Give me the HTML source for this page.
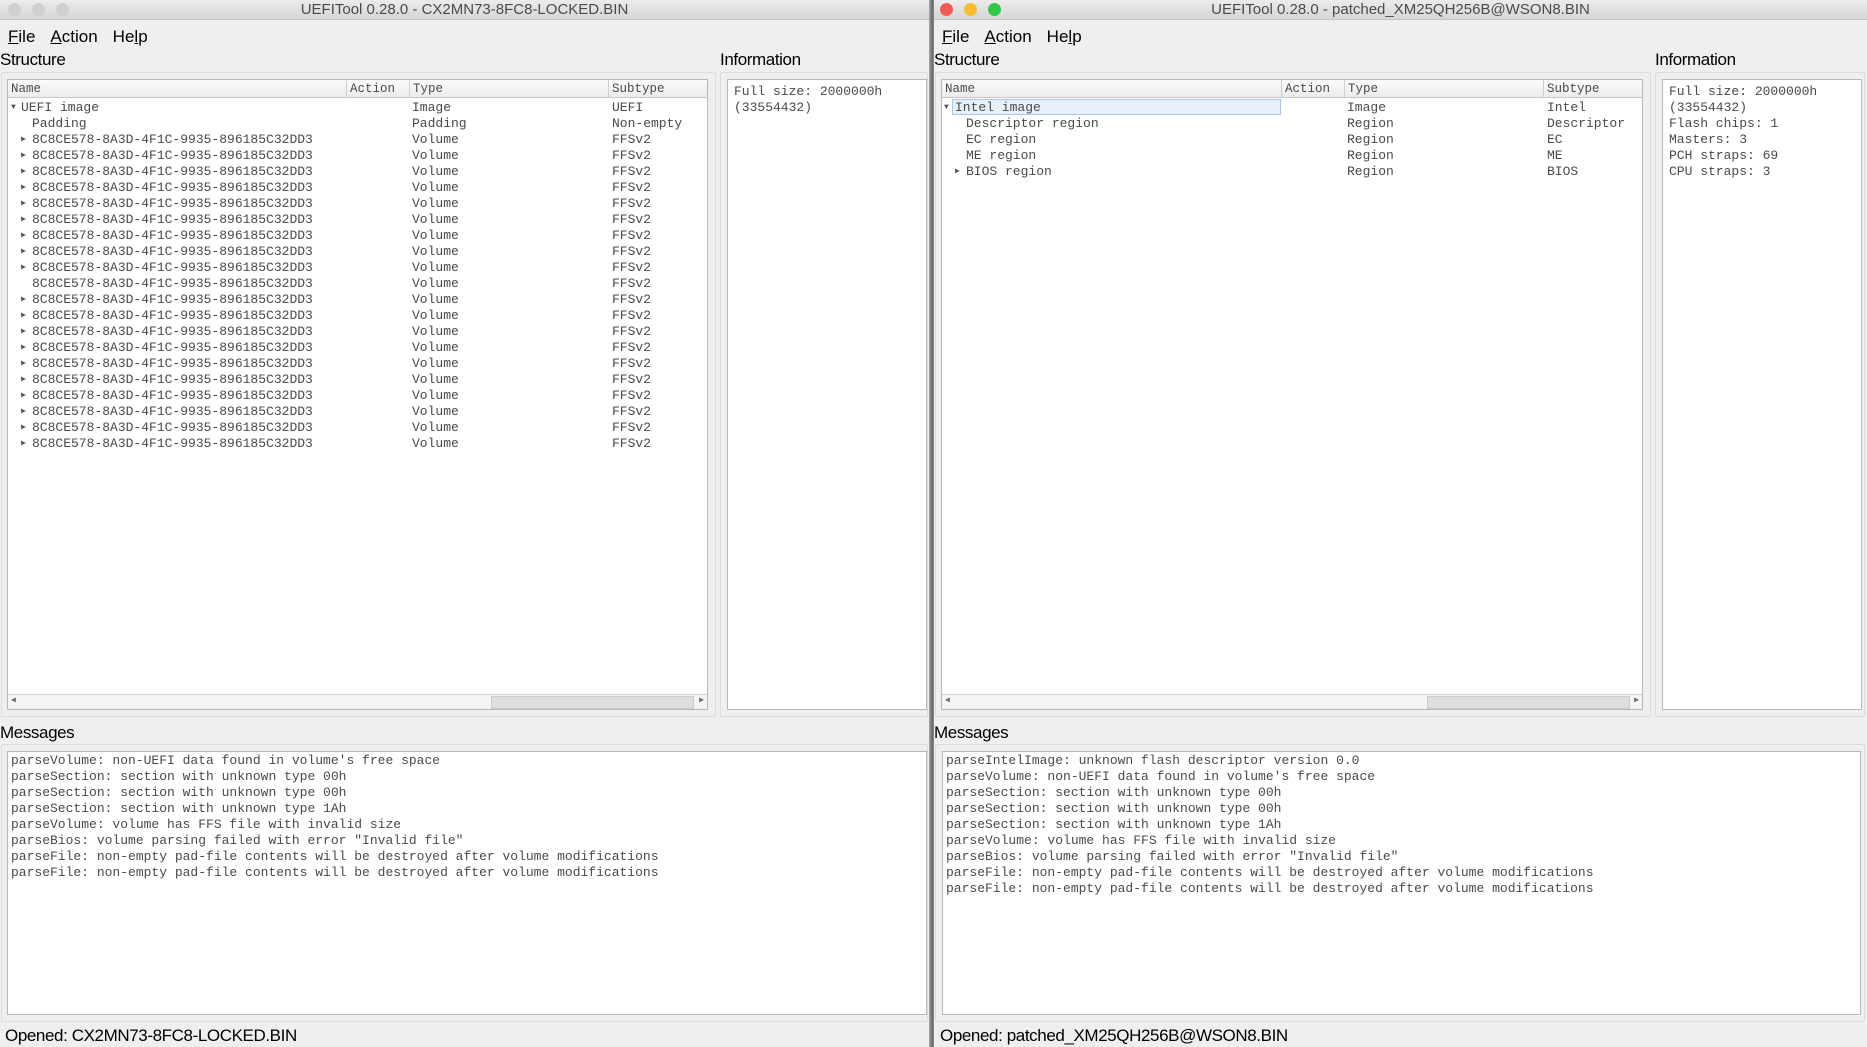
<!DOCTYPE html>
<html><head><meta charset="utf-8"><style>
*{margin:0;padding:0;box-sizing:border-box}
body{width:1867px;height:1047px;background:#efefef;position:relative;overflow:hidden;font-family:"Liberation Sans",sans-serif;color:#000}
.win{position:absolute;top:0;height:1047px;background:#efefef;overflow:hidden}
.tb{position:absolute;left:0;right:0;top:0;height:20px;background:linear-gradient(#ececec,#d6d6d6);border-bottom:1px solid #c4c4c4;text-align:center;font-size:15px;line-height:19px;color:#4a4a4a}
.dot{position:absolute;top:3px;width:13px;height:13px;border-radius:50%}
.menu{position:absolute;top:27px;left:8px;font-size:17px}
.menu span{margin-right:15px}
.lbl{position:absolute;font-size:17px;letter-spacing:-0.4px}
.frame{position:absolute;border:1px solid #dcdcdc;border-radius:2px}
.box{position:absolute;background:#fff;border:1px solid #b8b8b8;overflow:hidden;font-family:"Liberation Mono",monospace;font-size:13px;color:#4a4a4a}
.hdr{position:absolute;left:0;right:0;top:0;height:18px;background:linear-gradient(#fbfbfb,#ececec);border-bottom:1px solid #c8c8c8;font-size:12.5px;line-height:19px}
.hdr span{position:absolute;top:0;height:17px;border-left:1px solid #d0d0d0;padding-left:3px}
.row{position:absolute;left:0;right:0;height:16px;line-height:17px;white-space:pre}
.row span{position:absolute;top:0}
.sb{position:absolute;left:0;right:0;bottom:0;height:15px;background:#f4f4f4;border-top:1px solid #d0d0d0}
.thumb{position:absolute;top:1px;height:13px;background:#dedede;border:1px solid #ccc}
.msg{position:absolute;left:3px;line-height:16px;white-space:pre}
.st{position:absolute;top:1026px;font-size:17px;letter-spacing:-0.4px}
.arr{font-size:8px;color:#555}
</style></head><body>

<!-- LEFT WINDOW -->
<div class="win" style="left:0;width:929px">
 <div class="tb">UEFITool 0.28.0 - CX2MN73-8FC8-LOCKED.BIN
  <div class="dot" style="left:8px;background:#cfcfcf"></div><div class="dot" style="left:32px;background:#cfcfcf"></div><div class="dot" style="left:56px;background:#cfcfcf"></div>
 </div>
 <div class="menu"><span><u>F</u>ile</span><span><u>A</u>ction</span><span>He<u>l</u>p</span></div>
 <div class="lbl" style="left:0;top:50px">Structure</div>
 <div class="lbl" style="left:720px;top:50px">Information</div>
 <div class="frame" style="left:1px;top:72px;width:715px;height:645px"></div>
 <div class="frame" style="left:720px;top:72px;width:208px;height:645px"></div>
 <div class="box" style="left:7px;top:79px;width:701px;height:631px">
  <div class="hdr"><span style="left:0;border:0">Name</span><span style="left:338px">Action</span><span style="left:401px">Type</span><span style="left:600px">Subtype</span></div>
  <div class="row" style="top:19px"><span style="left:3px" class="arr">▼</span><span style="left:13px">UEFI image</span><span style="left:404px">Image</span><span style="left:604px">UEFI</span></div>
  <div class="row" style="top:35px"><span style="left:24px">Padding</span><span style="left:404px">Padding</span><span style="left:604px">Non-empty</span></div>
  <div class="row" style="top:51px"><span style="left:13px" class="arr">▶</span><span style="left:24px">8C8CE578-8A3D-4F1C-9935-896185C32DD3</span><span style="left:404px">Volume</span><span style="left:604px">FFSv2</span></div>
  <div class="row" style="top:67px"><span style="left:13px" class="arr">▶</span><span style="left:24px">8C8CE578-8A3D-4F1C-9935-896185C32DD3</span><span style="left:404px">Volume</span><span style="left:604px">FFSv2</span></div>
  <div class="row" style="top:83px"><span style="left:13px" class="arr">▶</span><span style="left:24px">8C8CE578-8A3D-4F1C-9935-896185C32DD3</span><span style="left:404px">Volume</span><span style="left:604px">FFSv2</span></div>
  <div class="row" style="top:99px"><span style="left:13px" class="arr">▶</span><span style="left:24px">8C8CE578-8A3D-4F1C-9935-896185C32DD3</span><span style="left:404px">Volume</span><span style="left:604px">FFSv2</span></div>
  <div class="row" style="top:115px"><span style="left:13px" class="arr">▶</span><span style="left:24px">8C8CE578-8A3D-4F1C-9935-896185C32DD3</span><span style="left:404px">Volume</span><span style="left:604px">FFSv2</span></div>
  <div class="row" style="top:131px"><span style="left:13px" class="arr">▶</span><span style="left:24px">8C8CE578-8A3D-4F1C-9935-896185C32DD3</span><span style="left:404px">Volume</span><span style="left:604px">FFSv2</span></div>
  <div class="row" style="top:147px"><span style="left:13px" class="arr">▶</span><span style="left:24px">8C8CE578-8A3D-4F1C-9935-896185C32DD3</span><span style="left:404px">Volume</span><span style="left:604px">FFSv2</span></div>
  <div class="row" style="top:163px"><span style="left:13px" class="arr">▶</span><span style="left:24px">8C8CE578-8A3D-4F1C-9935-896185C32DD3</span><span style="left:404px">Volume</span><span style="left:604px">FFSv2</span></div>
  <div class="row" style="top:179px"><span style="left:13px" class="arr">▶</span><span style="left:24px">8C8CE578-8A3D-4F1C-9935-896185C32DD3</span><span style="left:404px">Volume</span><span style="left:604px">FFSv2</span></div>
  <div class="row" style="top:195px"><span style="left:24px">8C8CE578-8A3D-4F1C-9935-896185C32DD3</span><span style="left:404px">Volume</span><span style="left:604px">FFSv2</span></div>
  <div class="row" style="top:211px"><span style="left:13px" class="arr">▶</span><span style="left:24px">8C8CE578-8A3D-4F1C-9935-896185C32DD3</span><span style="left:404px">Volume</span><span style="left:604px">FFSv2</span></div>
  <div class="row" style="top:227px"><span style="left:13px" class="arr">▶</span><span style="left:24px">8C8CE578-8A3D-4F1C-9935-896185C32DD3</span><span style="left:404px">Volume</span><span style="left:604px">FFSv2</span></div>
  <div class="row" style="top:243px"><span style="left:13px" class="arr">▶</span><span style="left:24px">8C8CE578-8A3D-4F1C-9935-896185C32DD3</span><span style="left:404px">Volume</span><span style="left:604px">FFSv2</span></div>
  <div class="row" style="top:259px"><span style="left:13px" class="arr">▶</span><span style="left:24px">8C8CE578-8A3D-4F1C-9935-896185C32DD3</span><span style="left:404px">Volume</span><span style="left:604px">FFSv2</span></div>
  <div class="row" style="top:275px"><span style="left:13px" class="arr">▶</span><span style="left:24px">8C8CE578-8A3D-4F1C-9935-896185C32DD3</span><span style="left:404px">Volume</span><span style="left:604px">FFSv2</span></div>
  <div class="row" style="top:291px"><span style="left:13px" class="arr">▶</span><span style="left:24px">8C8CE578-8A3D-4F1C-9935-896185C32DD3</span><span style="left:404px">Volume</span><span style="left:604px">FFSv2</span></div>
  <div class="row" style="top:307px"><span style="left:13px" class="arr">▶</span><span style="left:24px">8C8CE578-8A3D-4F1C-9935-896185C32DD3</span><span style="left:404px">Volume</span><span style="left:604px">FFSv2</span></div>
  <div class="row" style="top:323px"><span style="left:13px" class="arr">▶</span><span style="left:24px">8C8CE578-8A3D-4F1C-9935-896185C32DD3</span><span style="left:404px">Volume</span><span style="left:604px">FFSv2</span></div>
  <div class="row" style="top:339px"><span style="left:13px" class="arr">▶</span><span style="left:24px">8C8CE578-8A3D-4F1C-9935-896185C32DD3</span><span style="left:404px">Volume</span><span style="left:604px">FFSv2</span></div>
  <div class="row" style="top:355px"><span style="left:13px" class="arr">▶</span><span style="left:24px">8C8CE578-8A3D-4F1C-9935-896185C32DD3</span><span style="left:404px">Volume</span><span style="left:604px">FFSv2</span></div>
  <div class="sb"><span style="position:absolute;left:3px;top:0;font-size:8px;color:#666">◀</span><div class="thumb" style="left:483px;width:203px"></div><span style="position:absolute;right:3px;top:0;font-size:8px;color:#666">▶</span></div>
 </div>
 <div class="box" style="left:727px;top:79px;width:200px;height:631px">
  <div class="msg" style="left:6px;top:4px">Full size: 2000000h
(33554432)</div>
 </div>
 <div class="lbl" style="left:0;top:723px">Messages</div>
 <div class="frame" style="left:1px;top:744px;width:927px;height:278px"></div>
 <div class="box" style="left:7px;top:751px;width:920px;height:264px">
  <div class="msg" style="left:3px;top:1px">parseVolume: non-UEFI data found in volume's free space
parseSection: section with unknown type 00h
parseSection: section with unknown type 00h
parseSection: section with unknown type 1Ah
parseVolume: volume has FFS file with invalid size
parseBios: volume parsing failed with error "Invalid file"
parseFile: non-empty pad-file contents will be destroyed after volume modifications
parseFile: non-empty pad-file contents will be destroyed after volume modifications</div>
 </div>
 <div class="st" style="left:5px">Opened: CX2MN73-8FC8-LOCKED.BIN</div>
</div>

<div style="position:absolute;left:929px;top:0;width:5px;height:1047px;background:linear-gradient(90deg,#aaa,#6a6a6a 60%,#888)"></div>

<!-- RIGHT WINDOW -->
<div class="win" style="left:934px;width:933px">
 <div class="tb">UEFITool 0.28.0 - patched_XM25QH256B@WSON8.BIN
  <div class="dot" style="left:6px;background:#f25a55"></div><div class="dot" style="left:30px;background:#f8bc32"></div><div class="dot" style="left:54px;background:#33c748"></div>
 </div>
 <div class="menu" style="left:8px"><span><u>F</u>ile</span><span><u>A</u>ction</span><span>He<u>l</u>p</span></div>
 <div class="lbl" style="left:0;top:50px">Structure</div>
 <div class="lbl" style="left:721px;top:50px">Information</div>
 <div class="frame" style="left:1px;top:72px;width:716px;height:645px"></div>
 <div class="frame" style="left:721px;top:72px;width:210px;height:645px"></div>
 <div class="box" style="left:7px;top:79px;width:702px;height:631px">
  <div class="hdr"><span style="left:0;border:0">Name</span><span style="left:339px">Action</span><span style="left:402px">Type</span><span style="left:601px">Subtype</span></div>
  <div style="position:absolute;left:10px;top:19px;width:329px;height:16px;background:#e8f1fb;border:1px solid #a9c6e6"></div>
  <div class="row" style="top:19px"><span style="left:2px" class="arr">▼</span><span style="left:13px">Intel image</span><span style="left:405px">Image</span><span style="left:605px">Intel</span></div>
  <div class="row" style="top:35px"><span style="left:24px">Descriptor region</span><span style="left:405px">Region</span><span style="left:605px">Descriptor</span></div>
  <div class="row" style="top:51px"><span style="left:24px">EC region</span><span style="left:405px">Region</span><span style="left:605px">EC</span></div>
  <div class="row" style="top:67px"><span style="left:24px">ME region</span><span style="left:405px">Region</span><span style="left:605px">ME</span></div>
  <div class="row" style="top:83px"><span style="left:13px" class="arr">▶</span><span style="left:24px">BIOS region</span><span style="left:405px">Region</span><span style="left:605px">BIOS</span></div>
  <div class="sb"><span style="position:absolute;left:3px;top:0;font-size:8px;color:#666">◀</span><div class="thumb" style="left:485px;width:203px"></div><span style="position:absolute;right:3px;top:0;font-size:8px;color:#666">▶</span></div>
 </div>
 <div class="box" style="left:728px;top:79px;width:200px;height:631px">
  <div class="msg" style="left:6px;top:4px">Full size: 2000000h
(33554432)
Flash chips: 1
Masters: 3
PCH straps: 69
CPU straps: 3</div>
 </div>
 <div class="lbl" style="left:0;top:723px">Messages</div>
 <div class="frame" style="left:1px;top:744px;width:930px;height:278px"></div>
 <div class="box" style="left:8px;top:751px;width:919px;height:264px">
  <div class="msg" style="left:3px;top:1px">parseIntelImage: unknown flash descriptor version 0.0
parseVolume: non-UEFI data found in volume's free space
parseSection: section with unknown type 00h
parseSection: section with unknown type 00h
parseSection: section with unknown type 1Ah
parseVolume: volume has FFS file with invalid size
parseBios: volume parsing failed with error "Invalid file"
parseFile: non-empty pad-file contents will be destroyed after volume modifications
parseFile: non-empty pad-file contents will be destroyed after volume modifications</div>
 </div>
 <div class="st" style="left:6px">Opened: patched_XM25QH256B@WSON8.BIN</div>
</div>
</body></html>
